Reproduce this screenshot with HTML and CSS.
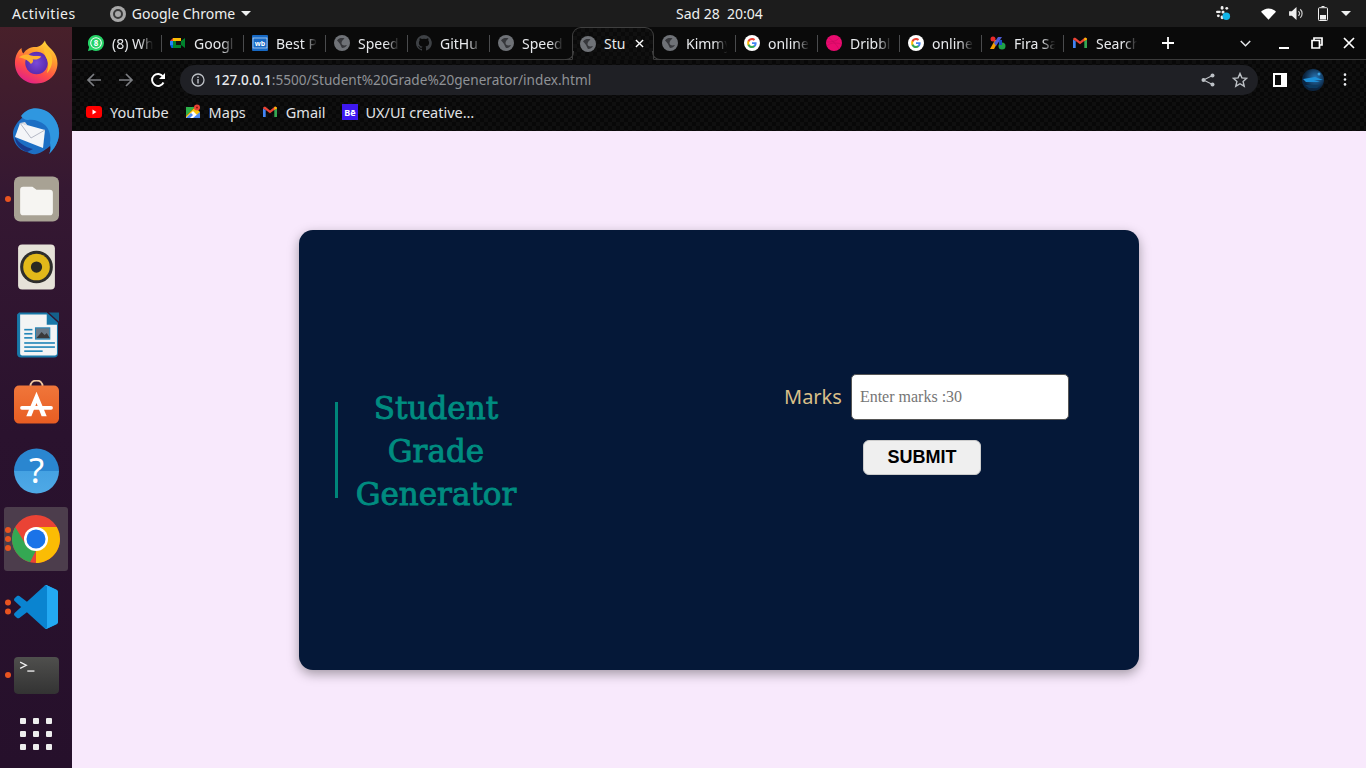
FILE: index.html
```html
<!DOCTYPE html>
<html lang="en">
<head>
<meta charset="utf-8">
<title>Student Grade Generator</title>
<link rel="stylesheet" href="styles.css">
</head>
<body>
<svg class="defs" width="0" height="0" aria-hidden="true">
  <defs>
    <symbol id="globe" viewBox="0 0 16 16">
      <circle cx="8" cy="8" r="8" fill="#6f7277"/>
      <path d="M3 5.500C5 2.500 9 3 10.500 3.500 9 5 7.500 6 7.500 8s2 3 5.500 2c-1 2-3 3-5 3-1-2-1.500-3-2-4S4 6.500 3 5.500z" fill="#36373b"/>
    </symbol>
    <symbol id="google" viewBox="0 0 16 16">
      <circle cx="8" cy="8" r="8" fill="#fff"/>
      <path d="M12.600 8.200c0-.4 0-.7-.1-1H8v1.900h2.600c-.1.600-.5 1.200-1 1.500v1.200h1.600c.9-.9 1.400-2.100 1.400-3.600z" fill="#4285f4"/>
      <path d="M8 13c1.300 0 2.400-.4 3.200-1.200l-1.600-1.200c-.4.300-1 .5-1.600.5-1.300 0-2.300-.8-2.700-2H3.700v1.300C4.500 12 6.100 13 8 13z" fill="#34a853"/>
      <path d="M5.300 9.100c-.2-.7-.2-1.500 0-2.200V5.600H3.700c-.7 1.300-.7 3.400 0 4.800z" fill="#fbbc05"/>
      <path d="M8 5c.7 0 1.300.2 1.800.7l1.400-1.400C10.400 3.500 9.200 3 8 3 6.100 3 4.500 4 3.700 5.600l1.600 1.300C5.700 5.800 6.700 5 8 5z" fill="#ea4335"/>
    </symbol>
    <symbol id="gmail" viewBox="0 0 16 16">
      <path d="M1 13V4.500L3.700 6v7z" fill="#4285f4"/>
      <path d="M12.300 13V6L15 4.500V13z" fill="#34a853"/>
      <path d="M1 4.500C1 3 2.600 2.300 3.700 3.100L8 6.400l4.300-3.300C13.400 2.300 15 3 15 4.500L12.300 6 8 9.300 3.700 6z" fill="#ea4335"/>
      <path d="M12.300 6V3.100C13.400 2.300 15 3 15 4.500z" fill="#fbbc05"/>
    </symbol>
    <linearGradient id="ff" x1="0.8" y1="0" x2="0.3" y2="1">
      <stop offset="0" stop-color="#ffdf3a"/><stop offset="0.35" stop-color="#ff9a2e"/><stop offset="0.7" stop-color="#ff4a4a"/><stop offset="1" stop-color="#e0208a"/>
    </linearGradient>
    <radialGradient id="ffg"><stop offset="0" stop-color="#7a4ad8"/><stop offset="1" stop-color="#5a2bb0"/></radialGradient>
    <linearGradient id="help" x1="0" y1="0" x2="0" y2="1"><stop offset="0" stop-color="#2a86d0"/><stop offset="0.5" stop-color="#2a86d0"/><stop offset="0.5" stop-color="#45a2e2"/><stop offset="1" stop-color="#4fa9e6"/></linearGradient>
    <linearGradient id="term" x1="0" y1="0" x2="0" y2="1"><stop offset="0" stop-color="#4f4f4d"/><stop offset="1" stop-color="#333"/></linearGradient>
    <linearGradient id="shop" x1="0" y1="0" x2="0" y2="1"><stop offset="0" stop-color="#f0763a"/><stop offset="1" stop-color="#e85d22"/></linearGradient>
    <radialGradient id="avatar" cx="0.6" cy="0.4"><stop offset="0" stop-color="#2a78b8"/><stop offset="1" stop-color="#0b2440"/></radialGradient>
  </defs>
</svg>

<header class="topbar">
  <div class="top-left">
    <span class="activities">Activities</span>
    <span class="app-menu">
      <svg class="app-icon" viewBox="0 0 16 16"><circle cx="8" cy="8" r="8" fill="#a8a8a8"/><circle cx="8" cy="8" r="4" fill="none" stroke="#3a3a3a" stroke-width="2"/></svg>
      <span>Google Chrome</span>
      <i class="caret"></i>
    </span>
  </div>
  <div class="clock">Sad 28&nbsp; 20:04</div>
  <div class="tray">
    <svg class="tray-slack" viewBox="0 0 16 16"><g fill="#eee"><rect x="5" y="0" width="3" height="4" rx="1.500"/><rect x="0" y="5" width="5" height="2.500" rx="1.200"/><rect x="6" y="5" width="3" height="3" rx="1"/><rect x="1" y="9" width="3" height="3" rx="1.500"/><rect x="5" y="10" width="3" height="4" rx="1.500"/><rect x="10" y="1" width="3" height="3" rx="1.500"/></g><circle cx="11" cy="11" r="4" fill="#11b5e8"/></svg>
    <svg class="tray-wifi" viewBox="0 0 16 12"><path d="M0 3.500C2 1.500 5 0 8 0s6 1.500 8 3.500L8 12z" fill="#fff"/></svg>
    <svg class="tray-vol" viewBox="0 0 16 14"><path d="M0 4.500h3L8 0v14L3 9.500H0z" fill="#eee"/><path d="M10 4.500a3 3 0 0 1 0 5M12 2.500a6 6 0 0 1 0 9" fill="none" stroke="#ccc" stroke-width="1.300"/></svg>
    <svg class="tray-batt" viewBox="0 0 10 15"><path d="M3.500 .5h3M1.500 1.700h7a1 1 0 0 1 1 1v11a.8.8 0 0 1-.8.8H1.300a.8.8 0 0 1-.8-.8v-11a1 1 0 0 1 1-1z" fill="none" stroke="#eee"/><rect x="2" y="9" width="6" height="4.500" fill="#eee"/></svg>
    <i class="caret tray-caret"></i>
  </div>
</header>

<div class="desktop">
  <nav class="dock">
    <div class="dock-item">
      <svg class="ic46 lift" viewBox="0 0 48 48"><path d="M33 1c1 6 9 9 12 17 5 13-4 29-21 29C10 47 1 37 1 25c0-7 3-13 7-16 0 3 1 5 2 6 3-5 8-7 13-7 4 0 8-3 10-7z" fill="url(#ff)"/><circle cx="24" cy="25" r="12" fill="url(#ffg)"/><path d="M5 19c4-3 9-4 13-2 4 1 8 0 11 1-2 3-6 4-9 3 1 2 0 4-2 5-2-3-7-6-13-7z" fill="#ffb02e"/><path d="M32 6c3 4 6 6 8 11 2 7 0 14-5 19 2-6 2-12-1-17-1-4-3-8-2-13z" fill="#ffc02e"/></svg>
    </div>
    <div class="dock-item">
      <svg class="ic48" viewBox="0 0 48 48"><path d="M9 12C15 3 27-1 35 5c8 5 13 14 12 23-1 8-5 14-10 19 2-3 2-6 1-8-4 3-8 7-14 8-3 1-6-1-9-2C6 43 1 35 1 27c0-5 3-11 8-15z" fill="#1d6fc4"/><path d="M16 3c8-4 20-1 26 8 5 7 6 15 4 22-2 6-5 10-9 14 2-4 2-8 1-11 1-6 0-13-5-18-5-4-11-6-17-5-3 0-6-2-7-4 2-3 5-5 7-6z" fill="#2f97e0"/><path d="M3 30c4 6 10 10 18 12l-6 3C9 43 3 37 3 30z" fill="#1a3a8c"/><path d="M8 16l25 7-2 18L3 30z" fill="#f4f5f8"/><path d="M8 16l11 15 14-8" fill="none" stroke="#b5b9c6"/><path d="M8 16l5-1 3 4z" fill="#d9dbe2"/></svg>
    </div>
    <div class="dock-item has-dots">
      <i class="dots"><b></b></i>
      <svg class="ic46" viewBox="0 0 44 44"><rect width="44" height="44" rx="6" fill="#a8a294"/><path d="M6 13a3 3 0 0 1 3-3h9l4 3h13a3 3 0 0 1 3 3v19a3 3 0 0 1-3 3H9a3 3 0 0 1-3-3z" fill="#f6f5f2"/></svg>
    </div>
    <div class="dock-item">
      <svg class="ic46" viewBox="0 0 44 44"><rect x="4" y="0" width="36" height="44" rx="4" fill="#e6e2d8"/><circle cx="22" cy="22" r="16" fill="#2e2e2c"/><circle cx="22" cy="22" r="13" fill="#e2b91a"/><circle cx="22" cy="22" r="5.500" fill="#2a2a22"/></svg>
    </div>
    <div class="dock-item">
      <svg class="ic46" viewBox="0 0 44 44"><path d="M6 0h27l11 10v30a4 4 0 0 1-4 4H8a4 4 0 0 1-4-4V2z" fill="#1878a8" transform="translate(-1 0)"/><path d="M6 2h26v10h10v28a2 2 0 0 1-2 2H8a2 2 0 0 1-2-2z" fill="#f3f4f4"/><path d="M34 0l10 0 0 9z" fill="#14608a"/><g fill="#2386b8"><rect x="10" y="16" width="8" height="1.600"/><rect x="10" y="20" width="8" height="1.600"/><rect x="10" y="24" width="8" height="1.600"/><rect x="10" y="29" width="30" height="1.600"/><rect x="10" y="33" width="30" height="1.600"/><rect x="10" y="37" width="18" height="1.600"/></g><rect x="21" y="15" width="14" height="11" fill="#6a7a88" stroke="#2386b8"/><path d="M22 25l5-6 3 3 2-2 3 5z" fill="#3a3a3a"/></svg>
    </div>
    <div class="dock-item">
      <svg class="ic46" viewBox="0 0 44 44"><path d="M16 6c0-8 12-8 12 0" fill="none" stroke="#f0c8a0" stroke-width="1.800"/><rect y="5" width="44" height="37" rx="5" fill="url(#shop)"/><path d="M22 11l10 24h-5l-5-13-5 13h-5z" fill="#fff"/><rect x="6" y="25" width="32" height="3.500" rx="1.700" fill="#fff"/></svg>
    </div>
    <div class="dock-item">
      <svg class="ic46 help-ic" viewBox="0 0 44 44"><circle cx="22" cy="22" r="22" fill="url(#help)"/><text x="22" y="34" class="help-q">?</text></svg>
    </div>
    <div class="dock-item active has-dots">
      <i class="dots"><b></b><b></b><b></b></i>
      <svg class="ic48" viewBox="0 0 48 48"><circle cx="24" cy="24" r="24" fill="#ea4335"/><path d="M24 12h20.800a24 24 0 0 1 3.200 12c0 13.300-10.700 24-24 24z" fill="#fbbc04"/><path d="M24 35.500L18 47.300A24 24 0 0 1 3.200 12l10.800 18z" fill="#34a853"/><circle cx="24" cy="24" r="12" fill="#fff"/><circle cx="24" cy="24" r="9.500" fill="#1a73e8"/></svg>
    </div>
    <div class="dock-item has-dots">
      <i class="dots"><b></b><b></b></i>
      <svg class="ic44" viewBox="0 0 100 100"><path d="M70.900 99.300c1.600.6 3.400.6 5-.2l20.600-9.900c2.100-1 3.500-3.200 3.500-5.600V16.400c0-2.400-1.400-4.600-3.500-5.600L75.900.9C73.800-.1 71.300.1 69.500 1.400c-.3.200-.5.400-.7.700L29.400 38 12.200 25c-1.600-1.200-3.800-1.100-5.300.2l-5.500 5c-1.800 1.700-1.800 4.500 0 6.200L16.200 50 1.400 63.600c-1.800 1.700-1.800 4.500 0 6.200l5.500 5c1.500 1.300 3.700 1.400 5.300.2l17.200-13 39.400 36c.6.600 1.400 1 2.100 1.300zM75 27.300L45.100 50 75 72.700z" fill="#0a84d0"/><path d="M75.900 99.100c-2.400 1.200-5.300.7-7.100-1.200 2.300 2.300 6.200.7 6.200-2.600V4.700c0-3.300-3.900-4.900-6.200-2.600 1.800-1.900 4.700-2.400 7.100-1.200l20.600 9.900c2.100 1 3.500 3.200 3.500 5.600v67.200c0 2.400-1.400 4.600-3.500 5.600z" fill="#23a9f2"/></svg>
    </div>
    <div class="dock-item has-dots">
      <i class="dots"><b></b></i>
      <svg class="ic46 term-ic" viewBox="0 0 44 36"><rect width="44" height="36" rx="4" fill="url(#term)"/><path d="M6 5l6 3-6 3" fill="none" stroke="#f0f0f0" stroke-width="1.300"/><rect x="13" y="13" width="7" height="1.300" fill="#f0f0f0"/></svg>
    </div>
    <div class="dock-grid"><i></i><i></i><i></i><i></i><i></i><i></i><i></i><i></i><i></i></div>
  </nav>

  <div class="browser">
    <div class="tabstrip">
      <div class="tab"><svg class="fav" viewBox="0 0 16 16"><path d="M8 0a8 8 0 0 1 0 16c-1.400 0-2.700-.4-3.900-1L0 16l1.100-3.900A8 8 0 0 1 8 0z" fill="#25d366"/><circle cx="8" cy="8" r="5.800" fill="#fff"/><circle cx="8" cy="8" r="4.800" fill="#25d366"/><text x="8" y="10.600" class="fav-8">8</text></svg><span class="tab-title">(8) Wh</span></div>
      <div class="tab"><svg class="fav" viewBox="0 0 16 16"><path d="M3 3h8v3l4-3v10l-4-3v3H3z" fill="#00832d"/><path d="M3 3h8v3H3z" fill="#fbbc04"/><path d="M0 6l3-3v3z" fill="#ea4335"/><path d="M0 6h3v4H0z" fill="#2684fc"/><path d="M0 10h3v3H1.500z" fill="#0066da"/><path d="M6 6h5v4H6z" fill="#111"/></svg><span class="tab-title">Googl</span></div>
      <div class="tab"><svg class="fav" viewBox="0 0 16 16"><rect width="16" height="16" rx="1" fill="#1769c4"/><rect x="1" y="3" width="14" height="10" fill="none" stroke="#cfe3f8" stroke-width=".7"/><text x="8" y="11" class="fav-wb">wb</text></svg><span class="tab-title">Best P</span></div>
      <div class="tab"><svg class="fav"><use href="#globe"/></svg><span class="tab-title">Speed</span></div>
      <div class="tab"><svg class="fav" viewBox="0 0 16 16"><path d="M8 0a8 8 0 0 0-2.500 15.600c.4.100.5-.2.500-.4v-1.400c-2.200.5-2.700-1-2.700-1-.4-.9-.9-1.200-.9-1.200-.7-.5.100-.5.100-.5.800.100 1.200.8 1.200.8.700 1.200 1.900.9 2.300.7.100-.5.300-.9.500-1.100-1.800-.2-3.600-.9-3.600-4 0-.9.300-1.600.8-2.100-.1-.2-.4-1 .1-2.100 0 0 .7-.2 2.200.8a7.600 7.600 0 0 1 4 0c1.500-1 2.200-.8 2.200-.8.400 1.100.2 1.900.1 2.100.5.600.8 1.300.8 2.100 0 3.100-1.900 3.700-3.600 3.900.3.200.5.700.5 1.500v2.200c0 .2.100.5.600.4A8 8 0 0 0 8 0z" fill="#3e4145"/></svg><span class="tab-title">GitHu</span></div>
      <div class="tab"><svg class="fav"><use href="#globe"/></svg><span class="tab-title">Speed</span></div>
      <div class="tab tab-active"><svg class="fav"><use href="#globe"/></svg><span class="tab-title">Stu</span><svg class="tab-close" viewBox="0 0 10 10"><path d="M1 1l8 8M9 1l-8 8" stroke="#fff" stroke-width="1.500"/></svg></div>
      <div class="tab"><svg class="fav"><use href="#globe"/></svg><span class="tab-title">Kimmy</span></div>
      <div class="tab"><svg class="fav"><use href="#google"/></svg><span class="tab-title">online</span></div>
      <div class="tab"><svg class="fav" viewBox="0 0 16 16"><circle cx="8" cy="8" r="8" fill="#ea0b6f"/><path d="M3 3c4 3 7 6 10 11M1 7c5 0 10-1 12-4M1 11c3-3 7-4 14-2" fill="none" stroke="#bf0a5c" stroke-width=".5"/></svg><span class="tab-title">Dribbl</span></div>
      <div class="tab"><svg class="fav"><use href="#google"/></svg><span class="tab-title">online</span></div>
      <div class="tab"><svg class="fav" viewBox="0 0 16 16"><path d="M0 14L5 5h4l-5 9z" fill="#f59f00"/><circle cx="3" cy="4" r="2.500" fill="#ea2a2a"/><path d="M8 2h4l-6 9-2-3z" fill="#4c5bd4"/><circle cx="12" cy="11" r="3.500" fill="#1fa34a"/><path d="M9 5h3v5H9z" fill="#1d4fc4"/></svg><span class="tab-title">Fira Sa</span></div>
      <div class="tab"><svg class="fav"><use href="#gmail"/></svg><span class="tab-title">Search</span></div>
      <svg class="new-tab" viewBox="0 0 12 12"><path d="M6 0v12M0 6h12" stroke="#fff" stroke-width="1.800"/></svg>
      <div class="win-controls">
        <svg class="chev" viewBox="0 0 10 6"><path d="M.7.7L5 5l4.300-4.300" fill="none" stroke="#e8eaed" stroke-width="1.300"/></svg>
        <svg class="win-btn" viewBox="0 0 12 12"><rect x="1" y="10" width="10" height="2" fill="#fff"/></svg>
        <svg class="win-btn" viewBox="0 0 12 12"><path d="M3 3V1h8v7H8.500M1 3.500h7.500V11H1z" fill="none" stroke="#fff" stroke-width="1.700"/></svg>
        <svg class="win-btn" viewBox="0 0 12 12"><path d="M1 1l10 10M11 1L1 11" stroke="#fff" stroke-width="1.700"/></svg>
      </div>
    </div>

    <div class="toolbar">
      <svg class="nav-ic" viewBox="0 0 16 16"><path d="M15 8H2M8 2L2 8l6 6" fill="none" stroke="#7c7e82" stroke-width="1.700"/></svg>
      <svg class="nav-ic" viewBox="0 0 16 16"><path d="M1 8h13M8 2l6 6-6 6" fill="none" stroke="#7c7e82" stroke-width="1.700"/></svg>
      <svg class="nav-ic" viewBox="0 0 16 16"><path d="M13.500 10.500A6 6 0 1 1 13 4.500" fill="none" stroke="#fff" stroke-width="1.900"/><path d="M15 1v6H9z" fill="#fff"/></svg>
      <div class="omnibox">
        <svg class="info-ic" viewBox="0 0 14 14"><circle cx="7" cy="7" r="6" fill="none" stroke="#bdc1c6" stroke-width="1.300"/><rect x="6.300" y="6" width="1.400" height="4.500" fill="#bdc1c6"/><rect x="6.300" y="3.500" width="1.400" height="1.500" fill="#bdc1c6"/></svg>
        <span class="url"><b>127.0.0.1</b>:5500/Student%20Grade%20generator/index.html</span>
        <svg class="omni-ic share" viewBox="0 0 14 14"><circle cx="11.500" cy="2.500" r="2" fill="#bdc1c6"/><circle cx="2.500" cy="7" r="2" fill="#bdc1c6"/><circle cx="11.500" cy="11.500" r="2" fill="#bdc1c6"/><path d="M11.500 2.500L2.500 7l9 4.500" fill="none" stroke="#bdc1c6" stroke-width="1.100"/></svg>
        <svg class="omni-ic star" viewBox="0 0 16 16"><path d="M8 1.500l1.900 4.400 4.800.4-3.600 3.200 1.100 4.700L8 11.700l-4.200 2.500 1.100-4.700L1.300 6.300l4.800-.4z" fill="none" stroke="#bdc1c6" stroke-width="1.400"/></svg>
      </div>
      <div class="toolbar-right">
        <svg class="side-ic" viewBox="0 0 14 14"><rect x="1" y="1" width="12" height="12" fill="none" stroke="#fff" stroke-width="2"/><rect x="8" y="1" width="5" height="12" fill="#fff"/></svg>
        <svg class="avatar" viewBox="0 0 22 22"><circle cx="11" cy="11" r="11" fill="url(#avatar)"/><path d="M1 10l12-2 8 3-9 0 6 2-14 0z" fill="#1e90d8"/><circle cx="17" cy="5" r="1.500" fill="#3aa0e0"/><path d="M3 16h15l-3 3H7z" fill="#0c3a60"/></svg>
        <svg class="dots-ic" viewBox="0 0 4 16"><circle cx="2" cy="2" r="1.600" fill="#e8eaed"/><circle cx="2" cy="8" r="1.600" fill="#e8eaed"/><circle cx="2" cy="14" r="1.600" fill="#e8eaed"/></svg>
      </div>
    </div>

    <div class="bookmarks">
      <div class="bm"><svg class="fav" viewBox="0 0 16 16"><rect y="2" width="16" height="12" rx="3" fill="#f00"/><path d="M6.500 5.500l4 2.500-4 2.500z" fill="#fff"/></svg><span>YouTube</span></div>
      <div class="bm"><svg class="fav" viewBox="0 0 16 16"><path d="M1 3h9l-9 9z" fill="#2db24a"/><path d="M1 12l9-9 5 5v6H1z" fill="#f4c20d"/><path d="M1 14l7-7 7 7z" fill="#fff"/><path d="M1 14l5-5 2 2-3 3z" fill="#4a89f3"/><path d="M8 14l7-6v6z" fill="#4a89f3"/><circle cx="12" cy="3.500" r="3" fill="#ea4335"/><circle cx="12" cy="3.500" r="1" fill="#8a1a10"/></svg><span>Maps</span></div>
      <div class="bm"><svg class="fav"><use href="#gmail"/></svg><span>Gmail</span></div>
      <div class="bm"><svg class="fav" viewBox="0 0 16 16"><rect width="16" height="16" fill="#3d18f0"/><text x="8" y="11.500" class="fav-be">Bē</text></svg><span>UX/UI creative…</span></div>
    </div>

    <main class="page">
      <section class="card">
        <div class="heading-wrap">
          <div class="rule"></div>
          <h1 class="heading">Student<br>Grade<br>Generator</h1>
        </div>
        <form class="form">
          <div class="field">
            <label class="label" for="marks">Marks</label>
            <input class="input" id="marks" type="text" placeholder="Enter marks :30">
          </div>
          <button class="submit" type="button">SUBMIT</button>
        </form>
      </section>
    </main>
  </div>
</div>
</body>
</html>
```
FILE: styles.css
```css
* { box-sizing: border-box; }
html, body { margin: 0; height: 100%; overflow: hidden; }
body { width: 1366px; height: 768px; display: flex; flex-direction: column; font-family: "Noto Sans", "Open Sans", sans-serif; background: #1c1c1c; }
.defs { position: absolute; }

.topbar { height: 27px; flex: none; background: #1c1c1c; color: #eef0f0; font-size: 14px; display: grid; grid-template-columns: 664px auto 1fr; align-items: center; padding: 0 0 0 12px; }
.top-left { display: flex; align-items: center; gap: 34px; }
.activities { letter-spacing: .55px; }
.app-menu { display: flex; align-items: center; gap: 6px; }
.app-icon { width: 16px; height: 16px; }
.caret { display: block; width: 0; height: 0; border-left: 5px solid transparent; border-right: 5px solid transparent; border-top: 5px solid #eef0f0; }
.clock { text-align: center; }
.tray { display: flex; align-items: center; justify-content: flex-end; }
.tray-slack { width: 15px; height: 15px; margin-right: 30px; }
.tray-wifi { width: 15px; height: 12px; margin-right: 13px; }
.tray-vol { width: 15px; height: 13px; margin-right: 14px; }
.tray-batt { width: 10px; height: 15px; margin-right: 13px; }
.tray-caret { margin-right: 15px; }

.desktop { flex: 1; display: flex; min-height: 0; }
.dock { width: 72px; flex: none; background: linear-gradient(180deg, #48202a 0, #351832 22%, #2a122e 55%, #26102b 100%); display: flex; flex-direction: column; align-items: center; padding-top: 2px; }
.dock-item { position: relative; width: 64px; height: 68px; flex: none; display: flex; align-items: center; justify-content: center; }
.dock-item.active { background: #4c3d4c; border-radius: 3px; height: 64px; margin: 2px 0; }
.ic46 { width: 45px; height: 46px; }
.ic48 { width: 48px; height: 48px; }
.ic44 { width: 44px; height: 44px; }
.lift { margin-bottom: 2px; }
.term-ic { height: 37px; }
.help-ic { overflow: visible; }
.help-q { font: 400 34px/1 "Noto Sans", sans-serif; fill: #fff; text-anchor: middle; }
.dots { position: absolute; left: 1px; top: 50%; transform: translateY(-50%); display: flex; flex-direction: column; gap: 3px; }
.dots b { display: block; width: 6px; height: 6px; border-radius: 50%; background: #e95420; }
.dock-grid { display: grid; grid-template-columns: repeat(3, 6px); gap: 7px; margin-top: 9px; }
.dock-grid i { width: 6px; height: 6px; border-radius: 1px; background: #eeeeee; }

.browser { flex: 1; min-width: 0; display: flex; flex-direction: column; }
.tabstrip { height: 33px; flex: none; background: #0a0a0a; border-bottom: 1px solid #3a3a3a; display: flex; align-items: stretch; padding-left: 8px; color: #e8eaed; font-size: 14px; }
.tab { width: 82px; flex: none; display: flex; align-items: center; padding-left: 8px; position: relative; }
.tab::after { content: ""; position: absolute; right: 0; top: 8px; height: 17px; width: 1px; background: #4a4b4d; }
.tab:nth-of-type(6)::after, .tab:nth-of-type(13)::after { display: none; }
.tab-active { background: repeating-conic-gradient(#0a0a0a 0 25%, #101010 0 50%) 0 0 / 8px 8px; border: 1px solid #3f3f3f; border-bottom: 1px solid #0d0d0d; border-radius: 9px 9px 0 0; height: 33px; padding-left: 7px; }
.tab.tab-active::before, .tab.tab-active::after { content: ""; position: absolute; bottom: -1px; top: auto; width: 8px; height: 8px; background: none; border-bottom: 1px solid #3f3f3f; }
.tab.tab-active::before { left: -8px; border-right: 1px solid #3f3f3f; border-bottom-right-radius: 8px; }
.tab.tab-active::after { right: -8px; border-left: 1px solid #3f3f3f; border-bottom-left-radius: 8px; }
.fav { width: 16px; height: 16px; flex: none; }
.tab-title { margin-left: 8px; width: 48px; overflow: hidden; white-space: nowrap; -webkit-mask-image: linear-gradient(90deg, #000 58%, transparent 86%); mask-image: linear-gradient(90deg, #000 58%, transparent 86%); }
.tab-active .tab-title { width: 27px; -webkit-mask-image: none; mask-image: none; }
.tab-close { width: 9px; height: 9px; margin-left: 4px; }
.fav-8 { font: 700 8px "Noto Sans", sans-serif; fill: #fff; text-anchor: middle; }
.fav-wb { font: 700 7px "Noto Sans", sans-serif; fill: #fff; text-anchor: middle; }
.fav-be { font: 700 9px "Noto Sans", sans-serif; fill: #fff; text-anchor: middle; }
.new-tab { width: 12px; height: 12px; align-self: center; margin-left: 16px; flex: none; }
.win-controls { display: flex; align-items: center; margin-left: 66px; }
.chev { width: 11px; height: 7px; margin-right: 27px; }
.win-btn { width: 12px; height: 12px; margin-right: 20.500px; }

.toolbar { height: 38px; flex: none; background: repeating-conic-gradient(#080808 0 25%, #0f0f0f 0 50%) 0 0 / 8px 8px; display: flex; align-items: center; padding: 1px 0 0 14px; }
.nav-ic { width: 16px; height: 16px; margin-right: 16px; flex: none; }
.omnibox { width: 1078px; height: 30px; margin-left: -2px; flex: none; background: #1f2025; border-radius: 15px; display: flex; align-items: center; padding: 0 10px 0 11px; }
.info-ic { width: 14px; height: 14px; flex: none; }
.url { margin-left: 9px; font-size: 13.6px; color: #8f9296; flex: 1; white-space: nowrap; }
.url b { font-weight: 500; color: #e8eaed; }
.omni-ic { flex: none; }
.share { width: 14px; height: 14px; margin-right: 17px; }
.star { width: 16px; height: 16px; }
.toolbar-right { display: flex; align-items: center; }
.side-ic { width: 14px; height: 14px; margin-left: 15px; }
.avatar { width: 22px; height: 22px; margin-left: 15px; }
.dots-ic { width: 4px; height: 13px; margin-left: 19px; }

.bookmarks { height: 33px; flex: none; background: repeating-conic-gradient(#080808 0 25%, #0f0f0f 0 50%) 0 0 / 8px 8px; display: flex; align-items: center; padding: 0 0 5px 14px; color: #e0e2e5; font-size: 14.5px; gap: 16px; }
.bm { display: flex; align-items: center; gap: 8px; white-space: nowrap; }

.page { flex: 1; min-height: 0; background: #f8e9fc; display: flex; align-items: center; justify-content: center; }
.card { width: 840px; height: 440px; background: #051838; border-radius: 14px; box-shadow: 0 4px 12px rgba(0,0,0,.35); display: flex; align-items: center; padding-left: 36px; }
.heading-wrap { display: flex; align-items: center; width: 420px; }
.rule { width: 3px; height: 96px; background: #008579; flex: none; }
.heading { margin: 4px 0 0 15px; width: 166px; text-align: center; color: #008c80; font: 400 31px/43px "DejaVu Serif", serif; -webkit-text-stroke: .9px #008c80; }
.form { display: flex; flex-direction: column; align-items: flex-start; margin-left: 29px; margin-top: -51px; }
.field { display: flex; align-items: center; gap: 9px; }
.label { color: #d8bf88; font-size: 20px; }
.input { width: 218px; height: 46px; background: #fff; border: 1px solid #555; border-radius: 5px; padding: 0 8px; font: 16px "Liberation Serif", serif; }
.input::placeholder { color: #757575; opacity: 1; }
.submit { width: 118px; height: 35px; margin: 20px 0 0 79px; background: #efefef; border: 1px solid #ccc; border-radius: 6px; font: 700 18px "Liberation Sans", sans-serif; color: #000; }
```
